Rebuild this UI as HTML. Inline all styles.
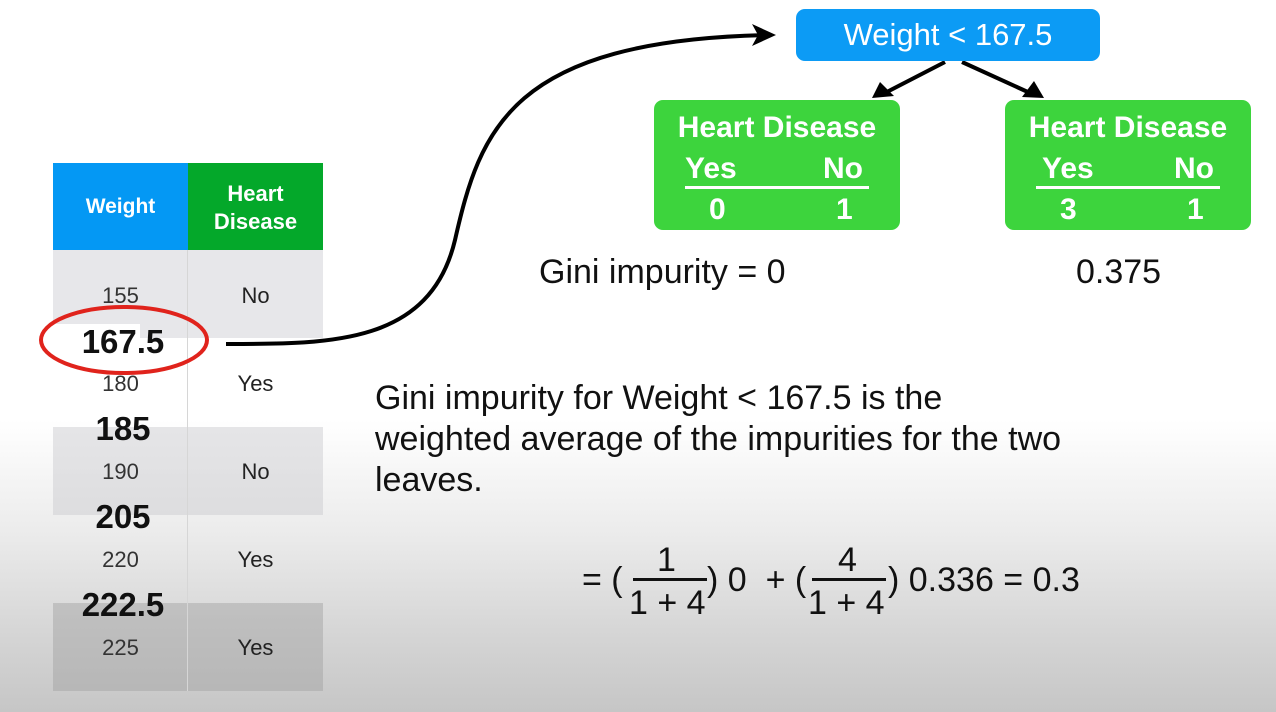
<!DOCTYPE html>
<html><head><meta charset="utf-8"><style>
*{margin:0;padding:0;box-sizing:border-box}
body{width:1276px;height:712px;overflow:hidden;position:relative;font-family:"Liberation Sans",Arial,sans-serif;background:linear-gradient(to bottom,#fff 0px,#fff 420px,#ececec 530px,#d4d4d4 640px,#c6c6c6 712px)}
.a{position:absolute;line-height:1}
.c{text-align:center}
.node{position:absolute;border-radius:9px;color:#fff;font-weight:bold}
.t{font-size:34px;color:#111}
.n{font-size:22px;color:#333}
.y{font-size:22px;color:#222}
.b{font-size:33px;font-weight:bold;color:#111}
.node .a{font-size:30px}
</style></head><body>
<div class="a" style="left:53px;top:163px;width:135px;height:87px;background:#0498f4;color:#fff;font-weight:bold;font-size:21px;line-height:87px;text-align:center">Weight</div>
<div class="a c" style="left:188px;top:163px;width:135px;height:87px;background:#04a82a;color:#fff;font-weight:bold;font-size:22px;line-height:28px;padding-top:17px">Heart<br>Disease</div>
<div class="a" style="left:53px;top:250px;width:270px;height:88px;background:rgba(215,215,220,0.6)"></div>
<div class="a" style="left:53px;top:427px;width:270px;height:88px;background:rgba(200,200,205,0.45)"></div>
<div class="a" style="left:53px;top:603px;width:270px;height:88px;background:rgba(160,160,160,0.45)"></div>
<div class="a" style="left:187px;top:250px;width:1px;height:441px;background:#d6d6d6"></div>
<div class="a c n" style="left:53px;top:285px;width:135px">155</div>
<div class="a c y" style="left:188px;top:285px;width:135px">No</div>
<div class="a c n" style="left:53px;top:373px;width:135px">180</div>
<div class="a c y" style="left:188px;top:373px;width:135px">Yes</div>
<div class="a c n" style="left:53px;top:461px;width:135px">190</div>
<div class="a c y" style="left:188px;top:461px;width:135px">No</div>
<div class="a c n" style="left:53px;top:549px;width:135px">220</div>
<div class="a c y" style="left:188px;top:549px;width:135px">Yes</div>
<div class="a c n" style="left:53px;top:637px;width:135px">225</div>
<div class="a c y" style="left:188px;top:637px;width:135px">Yes</div>
<div class="a" style="left:40px;top:324px;width:100px;height:14px;background:#fff"></div>
<div class="a c b" style="left:53px;top:325px;width:140px">167.5</div>
<div class="a c b" style="left:53px;top:412px;width:140px">185</div>
<div class="a c b" style="left:53px;top:500px;width:140px">205</div>
<div class="a c b" style="left:53px;top:588px;width:140px">222.5</div>
<svg class="a" style="left:0;top:0" width="1276" height="712">
<ellipse cx="124" cy="340" rx="83" ry="33" fill="none" stroke="#e0231c" stroke-width="4"/>
<path d="M226 344 C 330 344, 430 345, 455 240 C 480 130, 510 40, 770 35" fill="none" stroke="#000" stroke-width="4"/>
<path d="M752 24 L776 35 L752 46 L758 35 Z" fill="#000"/>
<path d="M945 62 L885 93" stroke="#000" stroke-width="4"/>
<path d="M872 98 L880 82 L894 96 Z" fill="#000"/>
<path d="M962 62 L1030 93" stroke="#000" stroke-width="4"/>
<path d="M1044 98 L1022 97 L1034 81 Z" fill="#000"/>
</svg>
<div class="node c" style="left:796px;top:9px;width:304px;height:52px;background:#0c9bf5;font-weight:normal;font-size:31px;line-height:52px">Weight &lt; 167.5</div>
<div class="node" style="left:654px;top:100px;width:246px;height:130px;background:#3dd43d">
<div class="a c" style="left:0;top:13px;width:246px">Heart Disease</div>
<div class="a" style="left:31px;top:54px">Yes</div>
<div class="a" style="left:169px;top:54px">No</div>
<div class="a" style="left:31px;top:86px;width:184px;height:3px;background:#fff"></div>
<div class="a" style="left:55px;top:95px">0</div>
<div class="a" style="left:182px;top:95px">1</div>
</div>
<div class="node" style="left:1005px;top:100px;width:246px;height:130px;background:#3dd43d">
<div class="a c" style="left:0;top:13px;width:246px">Heart Disease</div>
<div class="a" style="left:37px;top:54px">Yes</div>
<div class="a" style="left:169px;top:54px">No</div>
<div class="a" style="left:31px;top:86px;width:184px;height:3px;background:#fff"></div>
<div class="a" style="left:55px;top:95px">3</div>
<div class="a" style="left:182px;top:95px">1</div>
</div>
<div class="a t" style="left:539px;top:255px">Gini impurity = 0</div>
<div class="a t" style="left:1076px;top:255px">0.375</div>
<div class="a t" style="left:375px;top:378px;line-height:41px;width:800px;white-space:nowrap">Gini impurity for Weight &lt; 167.5 is the<br>weighted average of the impurities for the two<br>leaves.</div>
<div class="a t" style="left:582px;top:563px">= (</div>
<div class="a t" style="left:657px;top:543px">1</div>
<div class="a" style="left:633px;top:578px;width:74px;height:3px;background:#111"></div>
<div class="a t" style="left:629px;top:586px">1 + 4</div>
<div class="a t" style="left:707px;top:563px">) 0 &nbsp;+ (</div>
<div class="a t" style="left:838px;top:543px">4</div>
<div class="a" style="left:812px;top:578px;width:74px;height:3px;background:#111"></div>
<div class="a t" style="left:808px;top:586px">1 + 4</div>
<div class="a t" style="left:888px;top:563px">) 0.336 = 0.3</div>
</body></html>
